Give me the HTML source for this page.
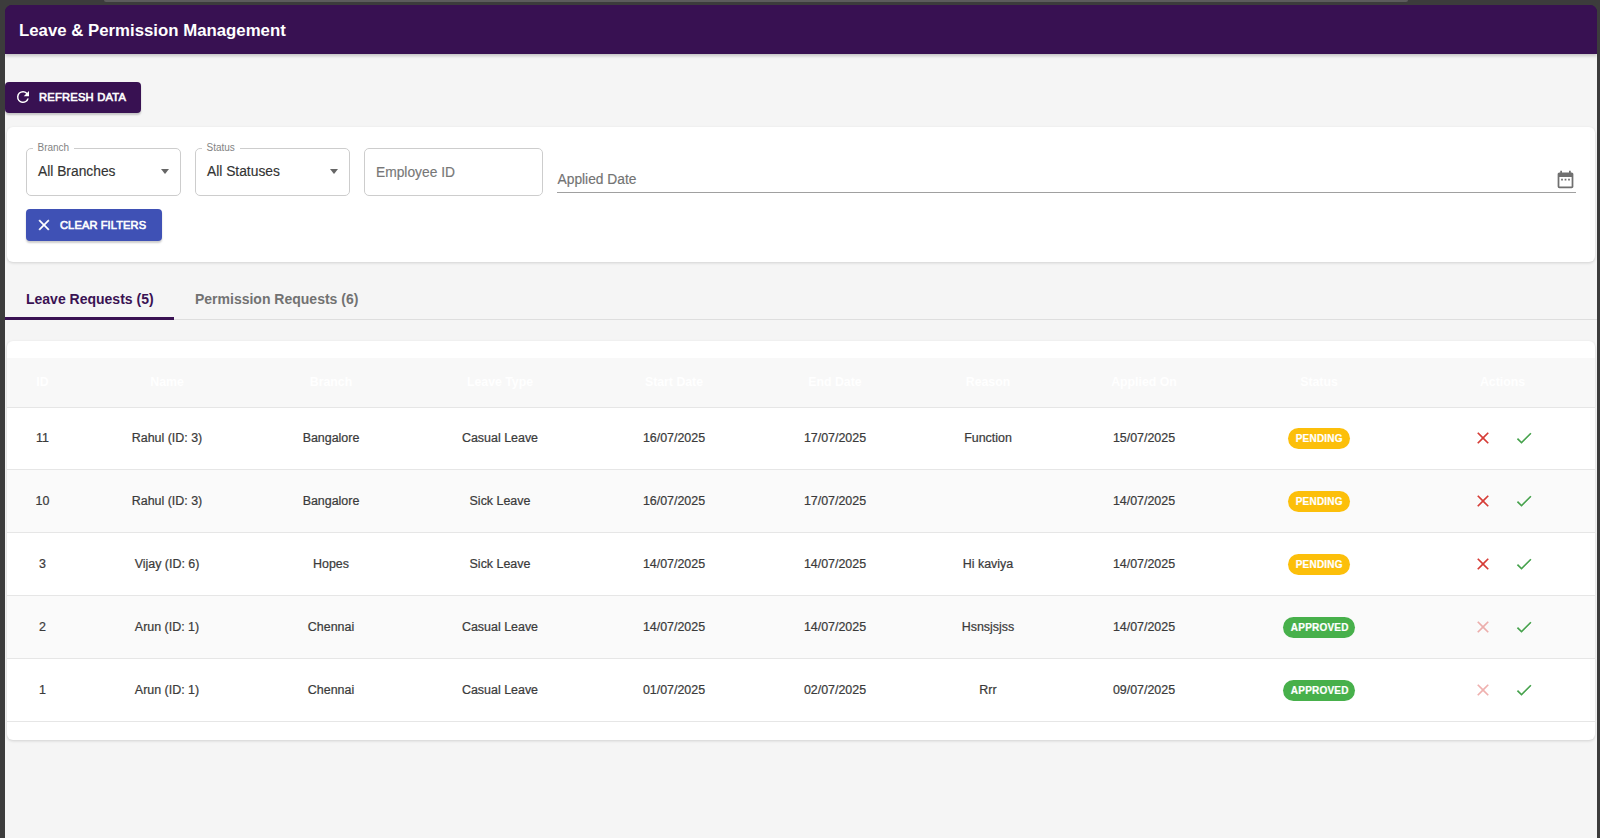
<!DOCTYPE html>
<html><head><meta charset="utf-8">
<style>
*{box-sizing:border-box;margin:0;padding:0}
html,body{width:1600px;height:838px;overflow:hidden;background:#3c3c3c;font-family:"Liberation Sans",sans-serif}
#topbar{position:absolute;left:104px;top:0;width:1304px;height:2px;background:#5c5c5c;border-radius:0 0 3px 3px}
#win{position:absolute;left:5px;top:5px;width:1591.5px;height:840px;background:linear-gradient(#381152 0,#381152 40px,#f5f5f5 40px);border-radius:7px 7px 0 0;overflow:hidden}
#hdr{position:absolute;left:0;top:0;width:100%;height:48.7px;background:#381152;box-shadow:0 2px 3px rgba(0,0,0,.2)}
#hdr h1{position:absolute;left:14px;top:16px;font-size:16.8px;font-weight:bold;color:#fff;line-height:20px;white-space:nowrap}
.btn{position:absolute;border-radius:4px;color:#fff;font-weight:normal;-webkit-text-stroke-width:0.6px;font-size:11.2px;letter-spacing:.2px;box-shadow:0 2px 2px rgba(0,0,0,.2)}
#refresh{left:0;top:77px;width:136px;height:31px;background:#381152}
#refresh span{position:absolute;left:34px;top:9px;line-height:12px}
#refresh svg{position:absolute;left:9.2px;top:6.3px}
#card{position:absolute;left:2px;top:122px;width:1588px;height:135px;background:#fff;border-radius:6px;box-shadow:0 1px 3px rgba(0,0,0,.15)}
.fld{position:absolute;top:20.7px;height:48px;border:1px solid #cdcdcd;border-radius:5px}
.fld .lbl{position:absolute;left:6px;top:-7px;font-size:10px;color:#838383;background:#fff;padding:0 5px 0 4.5px;line-height:12px}
.fld .val{position:absolute;left:11px;top:15.5px;font-size:13.8px;color:#333;-webkit-text-stroke-width:0.15px;line-height:16px;white-space:nowrap}
.fld .arr{position:absolute;right:10.7px;top:20.6px;width:0;height:0;border-left:4.5px solid transparent;border-right:4.5px solid transparent;border-top:5px solid #666}
#clear{left:19px;top:82px;width:136px;height:32px;font-size:11.1px;letter-spacing:.1px;background:#3f51b5}
#clear span{position:absolute;left:34px;top:9.5px;line-height:12px}
#clear svg{position:absolute;left:9.4px;top:7.3px}
#date{position:absolute;left:550px;top:28px;width:1019px;height:37.5px;border-bottom:1px solid #a0a0a0}
#date .val{position:absolute;left:0.5px;top:16.5px;font-size:13.8px;-webkit-text-stroke-width:0.15px;color:#737373;line-height:16px}
#date svg{position:absolute;left:997.6px;top:13.6px}
#tabs{position:absolute;left:0;top:260px;width:100%;height:55px;border-bottom:1px solid #dedede}
.tab{position:absolute;top:25.5px;font-size:14px;font-weight:bold;line-height:16px;white-space:nowrap}
#tab1{left:21px;color:#3a1253}
#tab2{left:190px;color:#727272}
#ind{position:absolute;left:0;top:52px;width:169px;height:3px;background:#3a1253}
#tcard{position:absolute;left:2px;top:336px;width:1588px;height:399px;background:#fff;border-radius:6px;box-shadow:0 1px 3px rgba(0,0,0,.15);overflow:hidden}
table{position:absolute;left:0;top:17px;width:1588px;border-collapse:collapse;table-layout:fixed}
th{height:49px;background:#f8f8f8;color:#fff;font-size:12.3px;font-weight:bold;text-align:center;border-bottom:1px solid #e6e6e6}
td{height:62.9px;font-size:12.45px;color:#3b3b3b;-webkit-text-stroke:0.22px #3b3b3b;text-align:center;border-bottom:1px solid #e6e6e6}
tr.alt td{background:#fafafa}
.chip{-webkit-text-stroke:0.2px #fff;display:inline-block;height:21px;line-height:21px;border-radius:10.5px;color:#fff;font-weight:bold;font-size:10px;padding:0 8px;letter-spacing:.2px}
.pend{background:#fcbf0a;width:62.5px}
.appr{background:#47b04b;width:72.3px}
.act{position:relative}
.act svg{position:absolute;top:20.5px}
</style></head><body>
<div id="topbar"></div>
<div id="win">
  <div id="hdr"><h1>Leave &amp; Permission Management</h1></div>
  <div class="btn" id="refresh">
    <svg width="18" height="18" viewBox="0 0 24 24"><path fill="#fff" d="M17.65 6.35A7.958 7.958 0 0 0 12 4a8 8 0 1 0 7.73 10h-2.08A6 6 0 1 1 12 6c1.66 0 3.14.69 4.22 1.78L13 11h7V4l-2.35 2.35z"/></svg>
    <span>REFRESH DATA</span>
  </div>
  <div id="card">
    <div class="fld" style="left:19px;width:155px"><div class="lbl">Branch</div><div class="val">All Branches</div><div class="arr"></div></div>
    <div class="fld" style="left:188px;width:155px"><div class="lbl">Status</div><div class="val">All Statuses</div><div class="arr"></div></div>
    <div class="fld" style="left:357px;width:179px"><div class="val" style="color:#777;top:16px">Employee ID</div></div>
    <div id="date"><div class="val">Applied Date</div>
      <svg width="21" height="21" viewBox="0 0 24 24"><path fill="#707070" d="M19 4h-1V2h-2v2H8V2H6v2H5c-1.11 0-1.99.9-1.99 2L3 20a2 2 0 0 0 2 2h14c1.1 0 2-.9 2-2V6c0-1.1-.9-2-2-2zm0 16H5V9h14v11zM7 11h2v2H7zm4 0h2v2h-2zm4 0h2v2h-2z"/></svg>
    </div>
    <div class="btn" id="clear">
      <svg width="18" height="18" viewBox="0 0 24 24"><path fill="#fff" stroke="#fff" stroke-width="0.5" d="M19 6.41 17.59 5 12 10.59 6.41 5 5 6.41 10.59 12 5 17.59 6.41 19 12 13.41 17.59 19 19 17.59 13.41 12z"/></svg>
      <span>CLEAR FILTERS</span>
    </div>
  </div>
  <div id="tabs">
    <div class="tab" id="tab1">Leave Requests (5)</div>
    <div class="tab" id="tab2">Permission Requests (6)</div>
    <div id="ind"></div>
  </div>
  <div id="tcard">
    <table>
      <colgroup><col style="width:71px"><col style="width:178px"><col style="width:150px"><col style="width:188px"><col style="width:160px"><col style="width:162px"><col style="width:144px"><col style="width:168px"><col style="width:182px"><col style="width:185px"></colgroup>
      <tr><th>ID</th><th>Name</th><th>Branch</th><th>Leave Type</th><th>Start Date</th><th>End Date</th><th>Reason</th><th>Applied On</th><th>Status</th><th>Actions</th></tr>
      <tr><td>11</td><td>Rahul (ID: 3)</td><td>Bangalore</td><td>Casual Leave</td><td>16/07/2025</td><td>17/07/2025</td><td>Function</td><td>15/07/2025</td><td><span class="chip pend">PENDING</span></td><td class="act"><svg width="20" height="20" viewBox="0 0 24 24" style="left:62.8px"><path fill="#d63c36" d="M19 6.41 17.59 5 12 10.59 6.41 5 5 6.41 10.59 12 5 17.59 6.41 19 12 13.41 17.59 19 19 17.59 13.41 12z"/></svg><svg width="20" height="20" viewBox="0 0 24 24" style="left:103.7px"><path fill="#46a24c" d="M9 16.17 4.83 12l-1.42 1.41L9 19 21 7l-1.41-1.41z"/></svg></td></tr>
      <tr class="alt"><td>10</td><td>Rahul (ID: 3)</td><td>Bangalore</td><td>Sick Leave</td><td>16/07/2025</td><td>17/07/2025</td><td></td><td>14/07/2025</td><td><span class="chip pend">PENDING</span></td><td class="act"><svg width="20" height="20" viewBox="0 0 24 24" style="left:62.8px"><path fill="#d63c36" d="M19 6.41 17.59 5 12 10.59 6.41 5 5 6.41 10.59 12 5 17.59 6.41 19 12 13.41 17.59 19 19 17.59 13.41 12z"/></svg><svg width="20" height="20" viewBox="0 0 24 24" style="left:103.7px"><path fill="#46a24c" d="M9 16.17 4.83 12l-1.42 1.41L9 19 21 7l-1.41-1.41z"/></svg></td></tr>
      <tr><td>3</td><td>Vijay (ID: 6)</td><td>Hopes</td><td>Sick Leave</td><td>14/07/2025</td><td>14/07/2025</td><td>Hi kaviya</td><td>14/07/2025</td><td><span class="chip pend">PENDING</span></td><td class="act"><svg width="20" height="20" viewBox="0 0 24 24" style="left:62.8px"><path fill="#d63c36" d="M19 6.41 17.59 5 12 10.59 6.41 5 5 6.41 10.59 12 5 17.59 6.41 19 12 13.41 17.59 19 19 17.59 13.41 12z"/></svg><svg width="20" height="20" viewBox="0 0 24 24" style="left:103.7px"><path fill="#46a24c" d="M9 16.17 4.83 12l-1.42 1.41L9 19 21 7l-1.41-1.41z"/></svg></td></tr>
      <tr class="alt"><td>2</td><td>Arun (ID: 1)</td><td>Chennai</td><td>Casual Leave</td><td>14/07/2025</td><td>14/07/2025</td><td>Hsnsjsjss</td><td>14/07/2025</td><td><span class="chip appr">APPROVED</span></td><td class="act"><svg width="20" height="20" viewBox="0 0 24 24" style="left:62.8px"><path fill="rgba(214,60,54,.4)" d="M19 6.41 17.59 5 12 10.59 6.41 5 5 6.41 10.59 12 5 17.59 6.41 19 12 13.41 17.59 19 19 17.59 13.41 12z"/></svg><svg width="20" height="20" viewBox="0 0 24 24" style="left:103.7px"><path fill="#46a24c" d="M9 16.17 4.83 12l-1.42 1.41L9 19 21 7l-1.41-1.41z"/></svg></td></tr>
      <tr><td>1</td><td>Arun (ID: 1)</td><td>Chennai</td><td>Casual Leave</td><td>01/07/2025</td><td>02/07/2025</td><td>Rrr</td><td>09/07/2025</td><td><span class="chip appr">APPROVED</span></td><td class="act"><svg width="20" height="20" viewBox="0 0 24 24" style="left:62.8px"><path fill="rgba(214,60,54,.4)" d="M19 6.41 17.59 5 12 10.59 6.41 5 5 6.41 10.59 12 5 17.59 6.41 19 12 13.41 17.59 19 19 17.59 13.41 12z"/></svg><svg width="20" height="20" viewBox="0 0 24 24" style="left:103.7px"><path fill="#46a24c" d="M9 16.17 4.83 12l-1.42 1.41L9 19 21 7l-1.41-1.41z"/></svg></td></tr>
    </table>
  </div>
</div>
</body></html>
